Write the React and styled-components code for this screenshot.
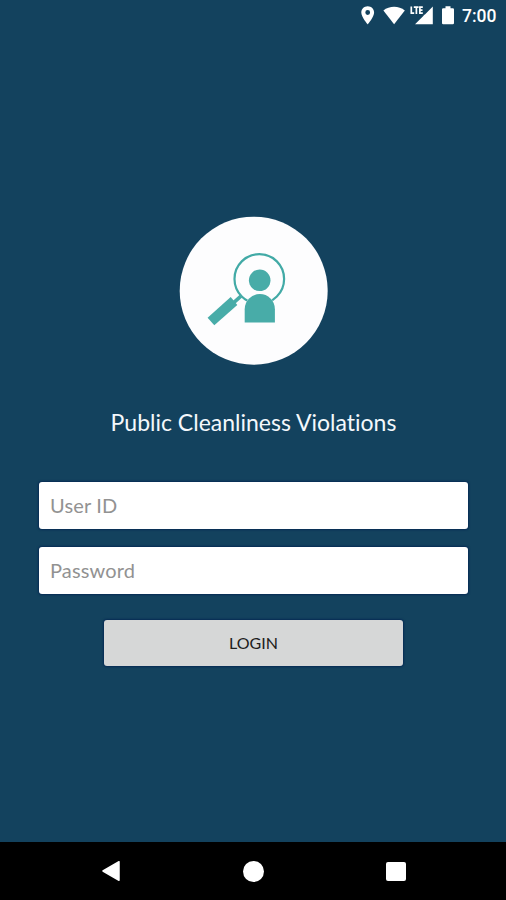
import React, { useState } from 'react';
import styled, { createGlobalStyle } from 'styled-components';

const StatusIcons = () => (
  <svg width='100' height='24' viewBox='358 4 100 24' fill='#fff'>
    <path
      fillRule='evenodd'
      d='M367.7 6.2c-3.7 0-6.4 2.8-6.4 6.3 0 4.6 6.4 11.9 6.4 11.9s6.4-7.3 6.4-11.9c0-3.5-2.7-6.3-6.4-6.3zm0 3.9a2.4 2.4 0 1 1 0 4.8 2.4 2.4 0 0 1 0-4.8z'
    />
    <path d='M383.4 10.5c6-5 15.4-5 21.4 0L394.1 24.2z' />
    <path d='M432.8 6.5V24.3H415L423.8 15.5V14.8H424.7z' />
    <path
      d='M411.3 6.5V13.2H414.2M413.8 7.2H418.6M416.4 7V14M422.8 7.2H419.9V13.2H422.8M419.9 10.2H422.5'
      fill='none'
      stroke='#fff'
      strokeWidth='1.7'
    />
    <path d='M445.5 6.3h5v2h2.3q1.2 0 1.2 1.2v13.6q0 1.2-1.2 1.2h-9.6q-1.2 0-1.2-1.2V9.5q0-1.2 1.2-1.2h2.3z' />
  </svg>
);

const Logo = () => (
  <svg width='148' height='148' viewBox='0.3 0.3 148 148' overflow='visible'>
    <circle cx='74' cy='74' r='74' fill='#fdfdfe' />
    <circle
      cx='79.6'
      cy='62.2'
      r='24.8'
      fill='none'
      stroke='#42aaa6'
      strokeWidth='2.2'
    />
    <path d='M61.8 79L54 86' stroke='#48aca8' strokeWidth='3.6' />
    <path d='M51 80.4l6.6 7.9L34.6 108.6 27.9 101z' fill='#48aca8' />
    <path
      d='M65 105.8V92.500a15.1 15.1 0 0 1 30.2 0v13.3z'
      fill='#48aca8'
      stroke='#fdfdfe'
      strokeWidth='1'
      paintOrder='stroke'
    />
    <circle cx='80' cy='63.6' r='10.8' fill='#48aca8' />
  </svg>
);

const App = () => {
  const [userId, setUserId] = useState('');
  const [password, setPassword] = useState('');

  return (
    <Screen>
      <GlobalStyle />
      <StatusBar>
        <StatusIcons />
        <Clock>7:00</Clock>
      </StatusBar>
      <Content>
        <Logo />
        <Title>Public Cleanliness Violations</Title>
        <Form onSubmit={(e) => e.preventDefault()}>
          <Field
            placeholder='User ID'
            value={userId}
            onChange={(e) => setUserId(e.target.value)}
          />
          <Field
            type='password'
            placeholder='Password'
            value={password}
            onChange={(e) => setPassword(e.target.value)}
          />
          <LoginButton type='submit'>LOGIN</LoginButton>
        </Form>
      </Content>
      <NavBar>
        <svg width='20' height='24' viewBox='0 0 20 24'>
          <path
            d='M18 2.7V21.3L2 12z'
            fill='#fff'
            stroke='#fff'
            strokeWidth='1.5'
            strokeLinejoin='round'
          />
        </svg>
        <HomeButton />
        <RecentsButton />
      </NavBar>
    </Screen>
  );
};

export default App;

const GlobalStyle = createGlobalStyle`
  * {
    box-sizing: border-box;
  }

  body {
    margin: 0;
    background: #13425e;
  }
`;

const Screen = styled.div`
  display: flex;
  flex-direction: column;
  width: 506px;
  height: 900px;
  overflow: hidden;
  background: #13425e;
  font-family: Lato, sans-serif;
`;

const StatusBar = styled.header`
  display: flex;
  justify-content: flex-end;
  height: 32px;
  padding: 4px 9px 0 0;
`;

const Clock = styled.span`
  width: 35px;
  margin-left: 4px;
  color: #fff;
  font: 500 17.5px/24px Roboto, sans-serif;
  white-space: nowrap;
`;

const Content = styled.main`
  display: flex;
  flex: 1;
  flex-direction: column;
  align-items: center;
  padding-top: 185px;
  padding-left: 1px;
`;

const Title = styled.h1`
  margin: 41px 0 0;
  color: #f4f8fc;
  font-size: 23px;
  font-weight: 400;
  font-variant-ligatures: none;
  line-height: 32px;
  white-space: nowrap;
`;

const Form = styled.form`
  display: flex;
  flex-direction: column;
  align-items: center;
  margin-top: 44px;
`;

const Field = styled.input`
  width: 429px;
  height: 47px;
  margin-bottom: 18px;
  padding: 0 11px 2px;
  border: 0;
  border-radius: 3px;
  outline: 0;
  background: #fff;
  box-shadow: 0 0 2px 1px #062b54;
  color: #333;
  font: 400 20px Lato, sans-serif;
  letter-spacing: 0.15px;

  &::placeholder {
    color: #929292;
    opacity: 1;
  }
`;

const LoginButton = styled.button`
  width: 299px;
  height: 46px;
  margin-top: 8px;
  padding: 0 0 2px;
  border: 0;
  border-radius: 3px;
  background: #d6d7d7;
  box-shadow: 0 0 2px 1px #062b54;
  color: #202020;
  font: 400 16px Lato, sans-serif;
`;

const NavBar = styled.nav`
  display: flex;
  align-items: center;
  justify-content: space-between;
  height: 58px;
  padding: 0 100px 0 101px;
  background: #000;
`;

const HomeButton = styled.span`
  width: 21px;
  height: 21px;
  border-radius: 50%;
  background: #fff;
`;

const RecentsButton = styled.span`
  width: 20px;
  height: 19px;
  border-radius: 2px;
  background: #fff;
`;
